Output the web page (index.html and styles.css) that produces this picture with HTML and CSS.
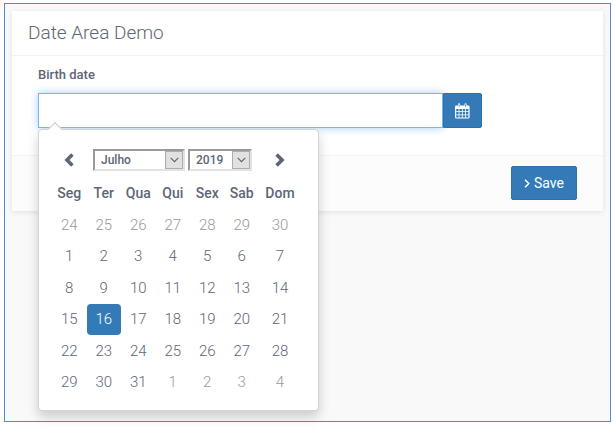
FILE: index.html
```html
<!DOCTYPE html>
<html lang="en">
<head>
<meta charset="utf-8">
<title>Date Area Demo</title>
<link rel="stylesheet" href="styles.css">
</head>
<body>
<main class="page">
  <form class="card">
    <h1 class="card-title">Date Area Demo</h1>
    <div class="card-body">
      <label class="label" for="birth">Birth date</label>
      <div class="date-field">
        <input class="date-input" id="birth" type="text">
        <button class="date-button" type="button" aria-label="Open calendar">
          <svg width="15" height="16" viewBox="0 0 15 16"><path fill="currentColor" fill-rule="evenodd" d="M1.2 2.5H3V1.3Q3 .2 4 .2T5.1 1.3V2.5H9.5V1.3Q9.5.2 10.5.2T11.6 1.3V2.5H13.3Q14.6 2.5 14.6 3.7V14.3Q14.6 15.5 13.3 15.5H1.2Q0 15.5 0 14.3V3.7Q0 2.5 1.2 2.5ZM3.7 1.2V4H4.4V1.2ZM10.2 1.2V4H10.9V1.2ZM1.2 6V8.2H3.6V6ZM4.4 6V8.2H6.9V6ZM7.7 6V8.2H10.2V6ZM11 6V8.2H13.4V6ZM1.2 9V11.4H3.6V9ZM4.4 9V11.4H6.9V9ZM7.7 9V11.4H10.2V9ZM11 9V11.4H13.4V9ZM1.2 12.2V14.4H3.6V12.2ZM4.4 12.2V14.4H6.9V12.2ZM7.7 12.2V14.4H10.2V12.2ZM11 12.2V14.4H13.4V12.2Z"/></svg>
        </button>
        <div class="picker">
          <div class="picker-nav">
            <button class="nav-button" type="button" aria-label="Previous month"><svg width="10" height="14" viewBox="0 0 10 14"><path d="M8.4 1.6 3 7l5.4 5.4" fill="none" stroke="currentColor" stroke-width="3.6"/></svg></button>
            <div class="selects">
              <span class="select-box month"><select class="select" aria-label="Month"><option>Julho</option></select><span class="arrow"><svg width="9" height="6" viewBox="0 0 9 6"><path d="m.7.8 3.8 3.8L8.3.8" fill="none" stroke="currentColor" stroke-width="1.2"/></svg></span></span>
              <span class="select-box year"><select class="select" aria-label="Year"><option>2019</option></select><span class="arrow"><svg width="9" height="6" viewBox="0 0 9 6"><path d="m.7.8 3.8 3.8L8.3.8" fill="none" stroke="currentColor" stroke-width="1.2"/></svg></span></span>
            </div>
            <button class="nav-button" type="button" aria-label="Next month"><svg width="10" height="14" viewBox="0 0 10 14"><path d="M1.6 1.6 7 7l-5.4 5.4" fill="none" stroke="currentColor" stroke-width="3.6"/></svg></button>
          </div>
          <table class="days">
            <colgroup><col span="6"><col class="last-col"></colgroup>
            <thead><tr><th>Seg</th><th>Ter</th><th>Qua</th><th>Qui</th><th>Sex</th><th>Sab</th><th>Dom</th></tr></thead>
            <tbody>
              <tr class="muted"><td>24</td><td>25</td><td>26</td><td>27</td><td>28</td><td>29</td><td>30</td></tr>
              <tr><td>1</td><td>2</td><td>3</td><td>4</td><td>5</td><td>6</td><td>7</td></tr>
              <tr><td>8</td><td>9</td><td>10</td><td>11</td><td>12</td><td>13</td><td>14</td></tr>
              <tr><td>15</td><td class="selected">16</td><td>17</td><td>18</td><td>19</td><td>20</td><td>21</td></tr>
              <tr><td>22</td><td>23</td><td>24</td><td>25</td><td>26</td><td>27</td><td>28</td></tr>
              <tr><td>29</td><td>30</td><td>31</td><td class="muted">1</td><td class="muted">2</td><td class="muted">3</td><td class="muted">4</td></tr>
            </tbody>
          </table>
        </div>
      </div>
    </div>
    <div class="card-footer">
      <button class="save" type="button"><svg width="6" height="9" viewBox="0 0 6 9"><path d="m1 .8 3.8 3.7L1 8.2" fill="none" stroke="currentColor" stroke-width="1.5"/></svg>Save</button>
    </div>
  </form>
</main>
</body>
</html>
```
FILE: styles.css
```css
* {
  box-sizing: border-box;
}

body {
  margin: 0;
  background: #fff;
  color: #5c6676;
  font: 14px/20px Roboto, sans-serif;
}

button,
input,
select {
  margin: 0;
  font: inherit;
  color: inherit;
}

svg {
  display: block;
}

.page {
  margin: 3px 2px 6px 4px;
  min-height: calc(100vh - 9px);
  padding: 7px;
  border: 1px solid #5b86cf;
  background: #f9f9f9;
}

.card {
  background: #fff;
  box-shadow: 0 1px 6px rgba(0, 0, 0, 0.1);
}

.card-title {
  margin: 0;
  padding: 10px 16px;
  border-bottom: 1px solid #f2f2f2;
  font-size: 19px;
  line-height: 24px;
  font-weight: 300;
}

.card-body {
  padding: 9px 121px 27px 26px;
}

.label {
  display: block;
  margin-bottom: 8px;
  font-size: 13px;
  font-weight: 500;
}

.date-field {
  position: relative;
  display: flex;
}

.date-input {
  flex: 1;
  min-width: 0;
  height: 35px;
  padding: 0 12px;
  border: 1px solid #74b8ec;
  border-radius: 0;
  outline: 0;
  background: #fff;
  box-shadow: 0 0 8px rgba(102, 175, 233, 0.6);
}

.date-button {
  display: flex;
  align-items: center;
  justify-content: center;
  width: 39px;
  padding: 0;
  border: 1px solid #2e6fae;
  border-radius: 0 2px 2px 0;
  background: #337ab7;
  color: #fff;
}

.picker {
  position: absolute;
  z-index: 1;
  top: 100%;
  left: 0;
  width: 281px;
  margin-top: 1px;
  padding: 19px 17px 12px 13px;
  border: 1px solid #d4d4d4;
  border-radius: 4px;
  background: #fff;
  box-shadow: 0 6px 12px rgba(0, 0, 0, 0.18);
}

.picker::before {
  content: "";
  position: absolute;
  top: -6px;
  left: 11px;
  width: 9px;
  height: 9px;
  border: solid #ccc;
  border-width: 1px 0 0 1px;
  background: #fff;
  transform: rotate(45deg);
}

.picker-nav {
  display: flex;
  align-items: center;
  justify-content: space-between;
  margin-bottom: 6px;
}

.nav-button {
  display: flex;
  justify-content: center;
  width: 34px;
  padding: 0;
  border: 0;
  background: none;
}

.nav-button:last-child {
  width: 42px;
}

.selects {
  display: flex;
  flex: 1;
  justify-content: center;
  gap: 3px;
}

.select-box {
  display: flex;
  height: 22px;
  border: 2px solid;
  border-color: #999 #e3e3e3 #e3e3e3 #999;
}

.month {
  width: 92px;
}

.year {
  width: 64px;
}

.select {
  flex: 1;
  min-width: 0;
  padding: 0 0 0 6px;
  border: 0;
  border-radius: 0;
  outline: 0;
  appearance: none;
  background: #fff;
  font-size: 12px;
  line-height: 16px;
  font-weight: 500;
}

.arrow {
  display: flex;
  align-items: center;
  justify-content: center;
  width: 18px;
  border: 1px solid #adadad;
  background: #e1e1e1;
  pointer-events: none;
}

.days {
  width: 100%;
  height: 221px;
  table-layout: fixed;
  border-collapse: separate;
  border-spacing: 0;
  text-align: center;
  font-size: 15px;
  font-weight: 300;
}

.last-col {
  width: 42px;
}

.days th,
.days td {
  height: 31px;
  padding: 0;
}

.days th {
  height: 32px;
  font-size: 14px;
  font-weight: 500;
}

.muted {
  color: #999;
}

.days .selected {
  border-radius: 4px;
  background: #337ab7;
  color: #fff;
}

.card-footer {
  display: flex;
  justify-content: flex-end;
  padding: 10px 26px 11px;
  border-top: 1px solid #f2f2f2;
  background: #fcfcfc;
}

.save {
  display: flex;
  align-items: center;
  gap: 4px;
  height: 34px;
  padding: 0 12px;
  border: 1px solid #2e6fae;
  border-radius: 2px;
  background: #337ab7;
  color: #fff;
}
```
